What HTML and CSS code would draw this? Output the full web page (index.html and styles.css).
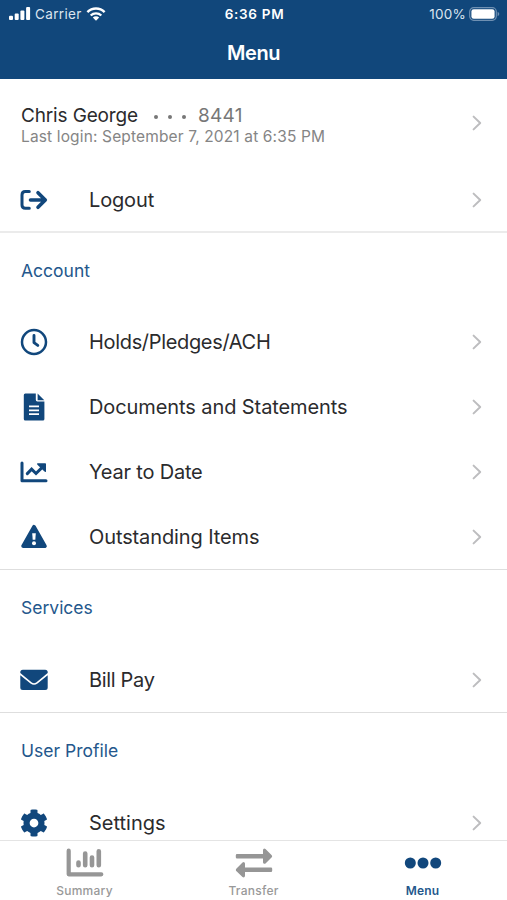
FILE: index.html
```html
<!DOCTYPE html>
<html lang="en">
<head>
<meta charset="utf-8">
<title>Menu</title>
<link rel="stylesheet" href="styles.css">
</head>
<body>
<svg class="defs" width="0" height="0" aria-hidden="true">
  <symbol id="chevron" viewBox="0 0 10 16"><path d="M1.6 1.6 8.2 8 1.6 14.4" fill="none" stroke="#bdbdbf" stroke-width="2" stroke-linecap="round" stroke-linejoin="round"/></symbol>
</svg>
<div class="app">
  <header class="header">
    <div class="status">
      <div class="status-left">
        <svg width="22" height="14" viewBox="0 0 22 14" fill="#fff"><rect x="0" y="8.8" width="4" height="4.2" rx="1"/><rect x="5.7" y="6.5" width="4" height="6.5" rx="1"/><rect x="11.4" y="3.5" width="4" height="9.5" rx="1"/><rect x="17.1" y="0" width="4" height="13" rx="1"/></svg>
        <span class="carrier">Carrier</span>
        <svg width="20" height="14" viewBox="0 0 20 14" fill="none" stroke="#fff"><path d="M1.4 5.1A12.3 12.3 0 0 1 18.6 5.1" stroke-width="2.5"/><path d="M4.7 8.5A7.6 7.6 0 0 1 15.3 8.5" stroke-width="2.4"/><path d="M10 13.8 6.8 10.6A4.5 4.5 0 0 1 13.2 10.6Z" fill="#fff" stroke="none"/></svg>
      </div>
      <span class="time">6:36 PM</span>
      <div class="status-right">
        <span class="percent">100%</span>
        <svg width="31" height="14" viewBox="0 0 31 14"><rect x=".7" y=".7" width="26.6" height="12.6" rx="4" fill="none" stroke="#6f90b2" stroke-width="1.2"/><rect x="2.4" y="2.3" width="23.2" height="9.4" rx="2.3" fill="#fff"/><path d="M28.6 4.7Q30.3 5.6 30.3 7T28.6 9.3Z" fill="#6f90b2"/></svg>
      </div>
    </div>
    <h1 class="title"><span>Menu</span></h1>
  </header>
  <main class="content">
    <div class="profile">
      <div class="profile-text">
        <div class="profile-line"><span class="name">Chris George</span><svg class="dots" width="34" height="6" viewBox="0 0 34 6" fill="#777"><circle cx="3" cy="3" r="2"/><circle cx="17" cy="3" r="2"/><circle cx="31" cy="3" r="2"/></svg><span class="number">8441</span></div>
        <div class="last"><span>Last login: September 7, 2021 at 6:35 PM</span></div>
      </div>
      <svg class="chev"><use href="#chevron"/></svg>
    </div>
    <div class="row">
      <svg class="icon" viewBox="0 0 28 28"><path d="M9.3 5.6H5.3Q2 5.6 2 8.9V19Q2 22.3 5.3 22.3H9.3" fill="none" stroke="#11477c" stroke-width="3" stroke-linecap="round"/><path d="M10.5 14H24.5M18 6.7 25.3 14 18 21.3" fill="none" stroke="#11477c" stroke-width="3.6" stroke-linecap="round" stroke-linejoin="round"/></svg>
      <span class="label l-logout">Logout</span><svg class="chev"><use href="#chevron"/></svg>
    </div>
    <section class="section strong">
      <h2 class="heading"><span>Account</span></h2>
      <div class="row">
        <svg class="icon" viewBox="0 0 28 28" fill="none" stroke="#11477c"><circle cx="14" cy="14" r="12" stroke-width="2.5"/><path d="M14 7.4V14.6L17.8 17.4" stroke-width="2.9" stroke-linecap="round" stroke-linejoin="round"/></svg>
        <span class="label l-holds">Holds/Pledges/ACH</span><svg class="chev"><use href="#chevron"/></svg>
      </div>
      <div class="row">
        <svg class="icon" viewBox="0 0 28 28"><path d="M5.3.5H15.8V6.8Q15.8 8.4 17.4 8.4H24.4V26Q24.4 27.5 22.9 27.5H5.3Q3.8 27.5 3.8 26V2Q3.8.5 5.3.5Z" fill="#11477c"/><path d="M17.6.6 24.3 7.2H17.6Z" fill="#11477c"/><path d="M9 13.4H19M9 17.3H19M9 21.1H19" stroke="#fff" stroke-width="1.7"/></svg>
        <span class="label l-docs">Documents and Statements</span><svg class="chev"><use href="#chevron"/></svg>
      </div>
      <div class="row">
        <svg class="icon" viewBox="0 0 28 28"><path d="M2 5V22.7H26" fill="none" stroke="#11477c" stroke-width="3" stroke-linecap="round" stroke-linejoin="round"/><path d="M7.3 15.6 11.6 11.2 16 15.5 22.7 8.9" fill="none" stroke="#11477c" stroke-width="3" stroke-linecap="round"/><path d="M17.5 5.3H25.2Q26 5.3 26 6.1V13.5Q25.5 14.5 24.5 13.6L17.4 6.8Q16.6 5.7 17.5 5.3Z" fill="#11477c"/></svg>
        <span class="label l-year">Year to Date</span><svg class="chev"><use href="#chevron"/></svg>
      </div>
      <div class="row">
        <svg class="icon" viewBox="0 0 28 28"><path d="M14 4.2 25 23.6H3Z" transform="translate(0 -.5)" fill="#11477c" stroke="#11477c" stroke-width="3.6" stroke-linejoin="round"/><path d="M12.2 10.3H15.8L15.3 16.8H12.7Z" fill="#fff"/><circle cx="14" cy="20.2" r="2" fill="#fff"/></svg>
        <span class="label l-items">Outstanding Items</span><svg class="chev"><use href="#chevron"/></svg>
      </div>
    </section>
    <section class="section">
      <h2 class="heading"><span>Services</span></h2>
      <div class="row">
        <svg class="icon" viewBox="0 0 28 28" fill="#11477c"><path d="M.3 7V6.2Q.3 3.7 2.8 3.7H25.2Q27.7 3.7 27.7 6.2V7L16.2 16.5Q14 18.1 11.8 16.5Z"/><path d="M.3 9.3 10.5 17.4Q14 20 17.5 17.4L27.7 9.3V21.6Q27.7 24.1 25.2 24.1H2.8Q.3 24.1.3 21.6Z"/></svg>
        <span class="label l-bill">Bill Pay</span><svg class="chev"><use href="#chevron"/></svg>
      </div>
    </section>
    <section class="section">
      <h2 class="heading"><span>User Profile</span></h2>
      <div class="row">
        <svg class="icon" viewBox="0 0 512 512" fill="#11477c"><path d="M487.4 315.7l-42.600-24.600c4.300-23.200 4.300-47 0-70.200l42.600-24.600c4.900-2.800 7.100-8.600 5.500-14-11.100-35.600-30-67.800-54.700-94.600-3.800-4.100-10-5.100-14.800-2.300L380.800 110c-17.900-15.400-38.500-27.300-60.800-35.100V25.800c0-5.600-3.900-10.500-9.400-11.700-36.700-8.200-74.300-7.800-109.200 0-5.500 1.200-9.400 6.100-9.400 11.700V75c-22.200 7.900-42.800 19.800-60.800 35.100L88.700 85.500c-4.900-2.800-11-1.900-14.800 2.300-24.700 26.700-43.600 58.900-54.700 94.600-1.700 5.400.6 11.200 5.500 14L67.300 221c-4.300 23.200-4.300 47 0 70.200l-42.600 24.600c-4.900 2.800-7.100 8.600-5.500 14 11.100 35.600 30 67.800 54.700 94.600 3.800 4.100 10 5.100 14.800 2.300l42.600-24.600c17.900 15.400 38.500 27.300 60.800 35.100v49.200c0 5.600 3.900 10.500 9.400 11.700 36.700 8.200 74.300 7.800 109.200 0 5.500-1.200 9.400-6.100 9.400-11.700v-49.200c22.200-7.900 42.800-19.800 60.800-35.100l42.600 24.600c4.900 2.800 11 1.900 14.800-2.300 24.700-26.700 43.600-58.900 54.700-94.600 1.500-5.500-.7-11.300-5.600-14.100zM256 336c-44.100 0-80-35.900-80-80s35.900-80 80-80 80 35.900 80 80-35.900 80-80 80z"/></svg>
        <span class="label l-settings">Settings</span><svg class="chev"><use href="#chevron"/></svg>
      </div>
    </section>
  </main>
  <nav class="tabs">
    <div class="tab">
      <svg width="38" height="30" viewBox="0 0 38 30"><path d="M2.7 2.700V26.300H35.300" fill="none" stroke="#969696" stroke-width="4.200" stroke-linecap="round" stroke-linejoin="round"/><path d="M12.500 14.600V17.300M19.200 5.500V17.300M26 9.500V17.300M32.800 3.200V17.300" stroke="#969696" stroke-width="4.600" stroke-linecap="round"/></svg>
      <span>Summary</span>
    </div>
    <div class="tab">
      <svg width="38" height="30" viewBox="0 0 38 30" fill="#969696"><path d="M2 6H28V2Q28.500-.4 30.500 1L36.500 7Q37.800 8.300 36.500 9.600L30.500 15.400Q28.500 16.500 28 14.400V10.400H2Q.8 10.400.8 9.200V7.200Q.8 6 2 6Z"/><path d="M36 19.600H10V15.600Q9.500 13.200 7.500 14.600L1.500 20.600Q.2 21.900 1.500 23.200L7.500 29Q9.500 30.100 10 28V24H36Q37.200 24 37.200 22.800V20.800Q37.200 19.600 36 19.600Z"/></svg>
      <span>Transfer</span>
    </div>
    <div class="tab active">
      <svg width="38" height="30" viewBox="0 0 38 30" fill="#11477c"><circle cx="6.300" cy="15" r="5.500"/><circle cx="19" cy="15" r="5.500"/><circle cx="31.700" cy="15" r="5.500"/></svg>
      <span>Menu</span>
    </div>
  </nav>
</div>
</body>
</html>
```
FILE: styles.css
```css
* { box-sizing: border-box; }
body { margin: 0; background: #fff; font-family: Inter, "Liberation Sans", sans-serif; color: #2b2b2d; }
svg { display: block; flex: none; }
.defs { position: absolute; }
.app { display: flex; flex-direction: column; width: 507px; height: 900px; overflow: hidden; }
.header { flex: none; height: 79px; background: #11477b; color: #fff; }
.status { display: grid; grid-template-columns: 1fr auto 1fr; align-items: center; height: 27px; padding: 0 7px 0 9px; font-size: 13.5px; }
.status-left, .status-right { display: flex; align-items: center; }
.status-left { gap: 4px; }
.status-right { justify-content: flex-end; gap: 3px; }
.carrier, .percent { color: #dce5ef; }
.carrier { letter-spacing: .35px; }
.percent { letter-spacing: .25px; }
.time { font-weight: 600; letter-spacing: .7px; }
.title { margin: 0; height: 51px; line-height: 52px; text-align: center; font-size: 20px; font-weight: 600; letter-spacing: -.4px; }
.content { flex: 1; min-height: 0; overflow: hidden; }
.profile, .row { display: flex; align-items: center; padding: 0 25px 0 20px; }
.profile { height: 88px; align-items: flex-start; padding-top: 25px; }
.profile-text { flex: 1; padding-left: 1px; }
.profile-line { display: flex; align-items: center; height: 23px; font-size: 19px; }
.name { letter-spacing: -.15px; }
.dots { margin: 3px 11px 0 15px; }
.number { color: #777; letter-spacing: .3px; }
.last { height: 18px; line-height: 20px; font-size: 15.5px; letter-spacing: .14px; color: #858585; }
.profile .chev { margin-top: 11px; }
.row { height: 65px; }
.icon { width: 28px; height: 28px; margin-right: 41px; }
.label { flex: 1; font-size: 20px; line-height: 24px; white-space: nowrap; }
.l-logout { letter-spacing: -.15px; }
.l-holds { letter-spacing: -.33px; }
.l-docs { letter-spacing: -.09px; }
.l-year { letter-spacing: -.2px; }
.l-items { letter-spacing: -.11px; }
.l-bill { letter-spacing: -.33px; }
.chev { width: 10px; height: 16px; }
.section { border-top: 1px solid #dedede; }
.section.strong { border-top: 2px solid #ebebeb; margin-top: -1px; }
.heading { margin: 0; height: 77px; line-height: 76px; padding-left: 21px; font-size: 17.5px; font-weight: 400; color: #24578c; }
.strong .heading { height: 76px; }
.tabs { flex: none; display: grid; grid-template-columns: repeat(3, 1fr); height: 60px; border-top: 1px solid #e4e4e4; background: #fff; }
.tab { display: flex; flex-direction: column; align-items: center; padding-top: 7px; gap: 5px; font-size: 12px; line-height: 16px; font-weight: 500; letter-spacing: .25px; color: #999; }
.active { color: #24578c; font-weight: 600; letter-spacing: .1px; }
```
